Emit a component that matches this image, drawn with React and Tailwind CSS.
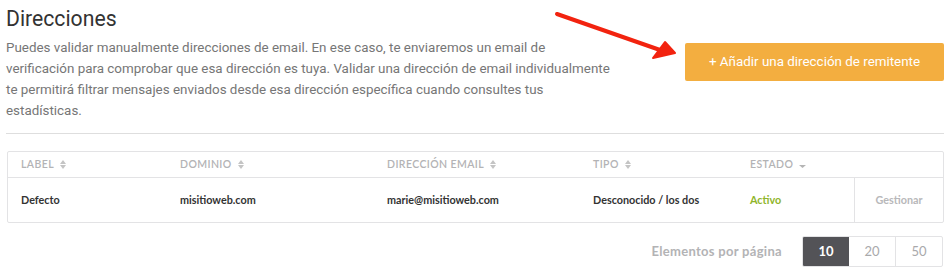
import React from 'react'

const cols = [
  { label: 'Label', w: 'w-[159px]', sort: true },
  { label: 'Dominio', w: 'w-[207px]', sort: true },
  { label: 'Dirección email', w: 'w-[206px]', sort: true },
  { label: 'Tipo', w: 'w-[157px]', sort: true },
  { label: 'Estado', w: 'w-[117px]', down: true },
]

function SortIcon() {
  return (
    <svg width="6" height="9" viewBox="0 0 6 9" className="ml-[6px] inline-block">
      <path d="M3 0 L6 4 L0 4 Z" fill="#c4c4c4" />
      <path d="M3 9 L6 5 L0 5 Z" fill="#c4c4c4" />
    </svg>
  )
}

function DownIcon() {
  return (
    <svg width="7" height="5" viewBox="0 0 7 5" className="ml-[6px] inline-block translate-y-[2px]">
      <path d="M0 1 L7 1 L3.5 4 Z" fill="#b5b5b5" />
    </svg>
  )
}

export default function App() {
  const rowCells = [
    { text: 'Defecto', w: 'w-[159px]' },
    { text: 'misitioweb.com', w: 'w-[207px]' },
    { text: 'marie@misitioweb.com', w: 'w-[206px]' },
    { text: 'Desconocido / los dos', w: 'w-[157px]' },
  ]

  return (
    <div className="relative h-[276px] w-[950px] overflow-hidden bg-white px-[6px]">
      {/* top: title + text + button */}
      <div className="flex items-start justify-between">
        <div className="w-[604px] pt-[5px]" style={{ fontFamily: 'Roboto, sans-serif' }}>
          <h1 className="text-[21.2px] leading-[28px] text-[#333333]">Direcciones</h1>
          <p className="mt-[4px] text-[13.4px] leading-[21px] text-[#767676]">
            Puedes validar manualmente direcciones de email. En ese caso, te enviaremos un email de verificación para comprobar que esa dirección es tuya. Validar una dirección de email individualmente te permitirá filtrar mensajes enviados desde esa dirección específica cuando consultes tus estadísticas.
          </p>
        </div>
        <button
          className="mt-[43px] h-[38px] w-[259px] shrink-0 rounded-[2px] bg-[#f3ae40] text-[13.4px] text-white"
          style={{ fontFamily: 'Roboto, sans-serif' }}
        >
          + Añadir una dirección de remitente
        </button>
      </div>

      {/* red arrow */}
      <svg className="absolute left-[550px] top-[6px]" width="140" height="60" viewBox="0 0 140 60">
        <line x1="7" y1="8" x2="110" y2="44" stroke="#f2230f" strokeWidth="4" strokeLinecap="round" />
        <path d="M115 36 L125 47 L103 52 Z" fill="#f2230f" stroke="#f2230f" strokeWidth="2" strokeLinejoin="round" />
      </svg>

      <div className="mt-[12px] h-px bg-[#dedede]" />

      {/* table */}
      <div
        className="mt-[17px] ml-px w-[937px] rounded-[2px] border border-[#e3e3e5]"
        style={{ fontFamily: 'Lato, sans-serif' }}
      >
        <div className="flex h-[26px] items-center border-b border-[#e3e3e5]">
          {cols.map((c) => (
            <div
              key={c.label}
              className={`${c.w} flex items-center pl-[13px] text-[10.5px] font-semibold uppercase tracking-[0.4px] text-[#b3b3b5]`}
            >
              {c.label}
              {c.sort && <SortIcon />}
              {c.down && <DownIcon />}
            </div>
          ))}
        </div>
        <div className="flex h-[44px] items-center">
          {rowCells.map((c) => (
            <div key={c.text} className={`${c.w} pl-[13px] text-[10.8px] font-bold text-[#333333]`}>
              {c.text}
            </div>
          ))}
          <div className="w-[117px] pl-[13px] text-[10.8px] font-bold text-[#8fb52a]">Activo</div>
          <div className="flex h-full flex-1 items-center justify-center border-l border-[#e3e3e5] text-[10.8px] font-bold text-[#b8b8ba]">
            Gestionar
          </div>
        </div>
      </div>

      {/* pagination */}
      <div
        className="mt-[13px] flex items-center justify-end pr-[1px]"
        style={{ fontFamily: 'Lato, sans-serif' }}
      >
        <span className="mr-[20px] text-[13px] font-bold tracking-[0.3px] text-[#b3b3b5]">Elementos por página</span>
        <div className="flex h-[31px] overflow-hidden rounded-[2px] border border-[#e3e3e5]">
          <div className="flex w-[46px] items-center justify-center bg-[#535357] text-[13px] font-bold text-white">10</div>
          <div className="flex w-[47px] items-center justify-center border-r border-[#e3e3e5] text-[13px] text-[#a9a9ab]">20</div>
          <div className="flex w-[46px] items-center justify-center text-[13px] text-[#a9a9ab]">50</div>
        </div>
      </div>
    </div>
  )
}
